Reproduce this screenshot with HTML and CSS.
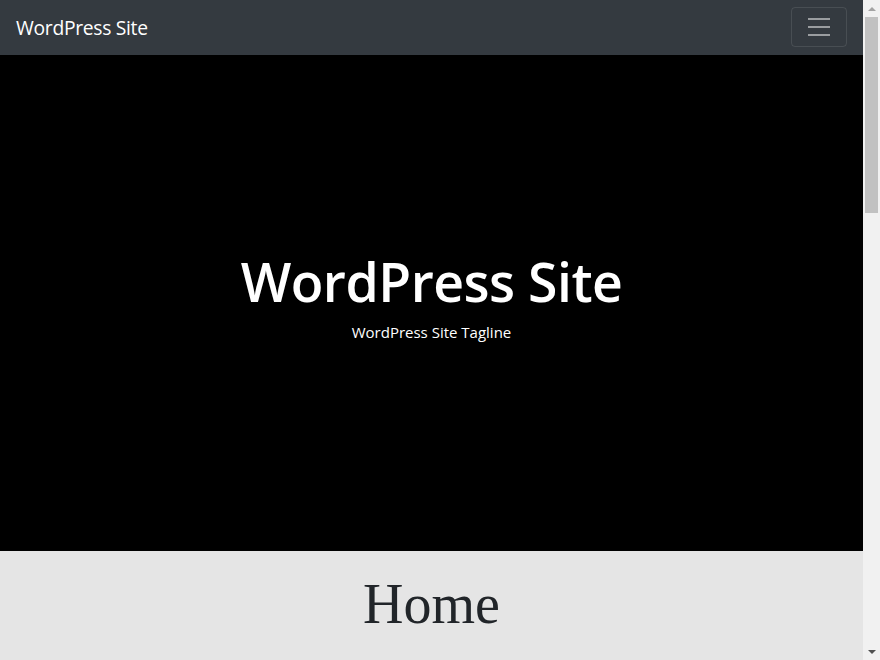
FILE: index.html
```html
<!DOCTYPE html>
<html lang="en">
<head>
<meta charset="utf-8">
<title>WordPress Site</title>
<link rel="stylesheet" href="styles.css">
</head>
<body>
<nav class="navbar">
  <a class="brand" href="#">WordPress Site</a>
  <button class="toggler" type="button" aria-label="Toggle navigation">
    <svg width="30" height="30" viewBox="0 0 30 30"><path stroke="rgba(255,255,255,0.5)" stroke-linecap="butt" stroke-miterlimit="10" stroke-width="2" d="M4 7h22M4 15h22M4 23h22"/></svg>
  </button>
</nav>
<header class="hero">
  <h1 class="hero-title">WordPress Site</h1>
  <p class="hero-tagline">WordPress Site Tagline</p>
</header>
<section class="page">
  <h1 class="page-title">Home</h1>
  <div class="page-body"></div>
</section>
<div class="scrollbar" aria-hidden="true">
  <div class="sb-btn"><svg width="8" height="4" viewBox="0 0 8 4"><path d="M4 0L8 4H0Z" fill="#a3a3a3"/></svg></div>
  <div class="sb-track"><div class="sb-thumb"></div></div>
  <div class="sb-btn"><svg width="8" height="4" viewBox="0 0 8 4"><path d="M0 0H8L4 4Z" fill="#505050"/></svg></div>
</div>
</body>
</html>
```
FILE: styles.css
```css
html, body {
  margin: 0;
  padding: 0;
}
body {
  font-family: "Open Sans", "Noto Sans", "Liberation Sans", sans-serif;
  background: #e5e5e5;
  color: #212529;
  padding-right: 17px;
}
.navbar {
  height: 55px;
  box-sizing: border-box;
  background: #343a40;
  display: flex;
  align-items: center;
  justify-content: space-between;
  padding: 0 16px;
}
.brand {
  color: #fff;
  text-decoration: none;
  font-size: 19.3px;
  letter-spacing: -0.3px;
}
.toggler {
  width: 56px;
  height: 40px;
  background: transparent;
  border: 1px solid rgba(255,255,255,0.1);
  border-radius: 4px;
  display: flex;
  align-items: center;
  justify-content: center;
  padding: 0;
  margin-top: -1px;
}
.toggler svg {
  display: block;
}
.hero {
  background: #000;
  height: 496px;
  display: flex;
  flex-direction: column;
  align-items: center;
  justify-content: center;
  color: #fff;
  padding-bottom: 14px;
  box-sizing: border-box;
}
.hero-title {
  margin: 0;
  font-size: 53.5px;
  font-weight: 600;
  line-height: 1.2;
  letter-spacing: -0.5px;
}
.hero-tagline {
  margin: 7px 0 0;
  font-size: 15px;
}
.page {
  padding: 20px 0 200px;
  text-align: center;
}
.page-title {
  margin: 0;
  font-family: "Liberation Serif", "Times New Roman", serif;
  font-weight: 400;
  font-size: 56px;
  line-height: 1.2;
  color: #212529;
}
.scrollbar {
  position: fixed;
  top: 0;
  right: 0;
  bottom: 0;
  width: 17px;
  background: #f1f1f1;
  display: flex;
  flex-direction: column;
}
.sb-btn {
  height: 17px;
  display: flex;
  align-items: center;
  justify-content: center;
  flex: none;
}
.sb-btn svg {
  display: block;
}
.sb-track {
  flex: 1;
  padding: 0 2px;
}
.sb-thumb {
  height: 196px;
  background: #c1c1c1;
}
```
